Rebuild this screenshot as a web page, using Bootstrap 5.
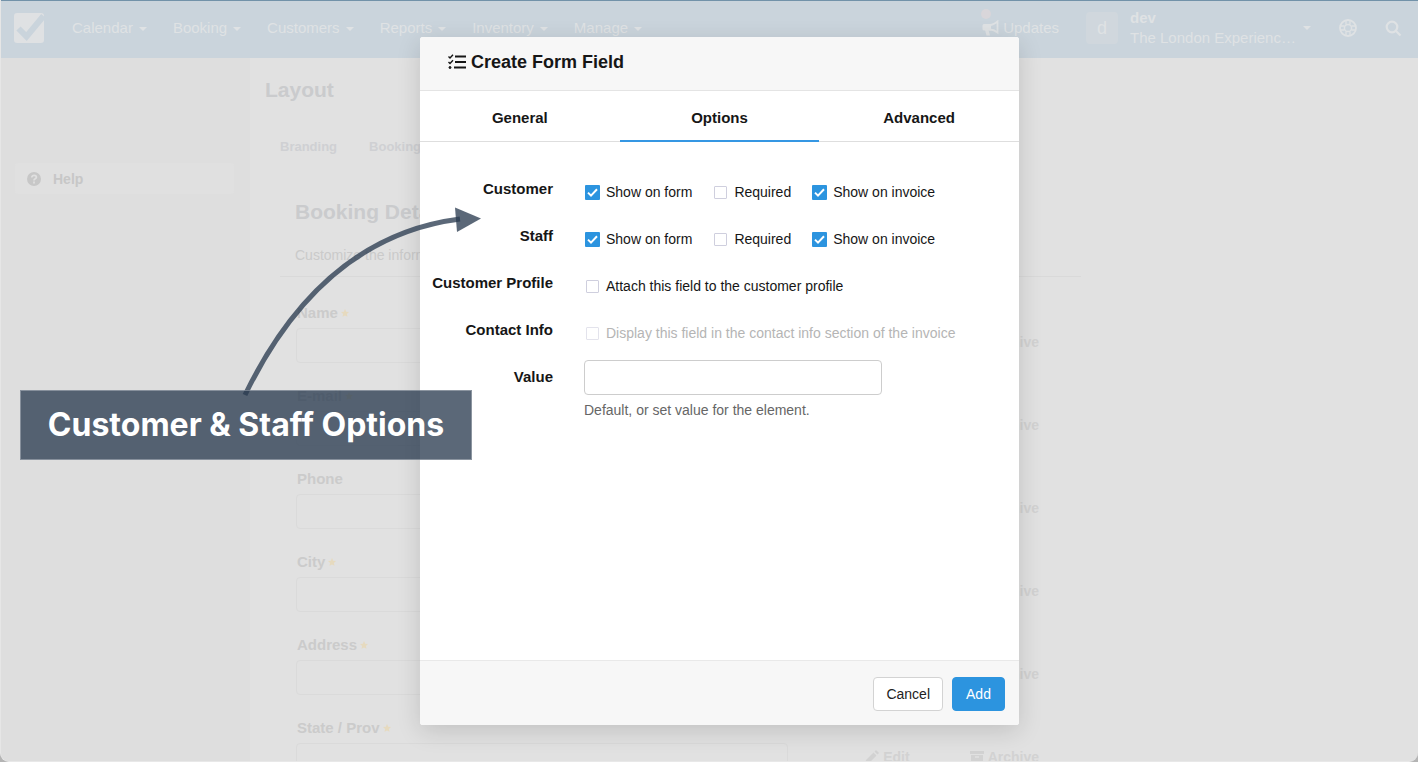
<!DOCTYPE html>
<html lang="en">
<head>
<meta charset="utf-8">
<meta name="viewport" content="width=device-width, initial-scale=1">
<title>Create Form Field</title>
<link href="https://cdn.jsdelivr.net/npm/bootstrap@5.3.0/dist/css/bootstrap.min.css" rel="stylesheet">
<style>
  body { font-family: "Liberation Sans", Arial, sans-serif; font-size: 15px; line-height: 22px; background: #b4b4b4; color: #161616; }
  a { text-decoration: none; color: inherit; }
  /* dimmed application behind the dialog */
  .app-shell { background: #e1e1e1; border-radius: 0 0 9px 9px; border-left: 1px solid #e6e6e6; border-bottom: 1px solid #e8e8e8; color: #cbcbcb; }
  .topbar { height: 58px; background: #cad4dc; border-top: 1px solid #7292a9; color: #dfe2e4; padding: 0 16px 3px 12px; }
  .topbar .menu { gap: 26px; margin-left: 27px; }
  .topbar a { white-space: nowrap; }
  .arrow-down { display: inline-block; border: 4px solid transparent; border-top-color: currentColor; border-bottom: 0; margin-left: 6px; vertical-align: 2px; }
  .updates { margin-right: 27px; }
  .dot { width: 10px; height: 10px; background: #d9d6da; top: -8px; left: -1px; }
  .avatar { width: 32px; height: 32px; background: #d0d7dd; border-radius: 4px; font-size: 18px; margin-right: 12px; }
  .account { line-height: 20px; width: 173px; }
  .side { width: 249px; background: #dedede; padding: 105px 16px 0 14px; }
  .help { background: #e0e0e0; height: 31px; padding: 0 12px; gap: 12px; border-radius: 3px; color: #c7c7c7; font-size: 14px; }
  .page { padding: 17px 0 0 15px; }
  .page h1 { font-size: 21px; line-height: 30px; margin: 0 0 31px; color: #cacbcd; }
  .subtabs { gap: 32px; padding-left: 15px; font-size: 13px; color: #cfd0d3; }
  .page h2 { font-size: 21px; line-height: 30px; margin: 0 0 17px; color: #cacbcd; }
  .panel-top { padding: 39px 0 0 15px; margin-left: 15px; width: 801px; border-bottom: 1px solid #d9d9d9; height: 119px; color: #cacaca; font-size: 14px; }
  .entry { margin: 0 0 22px 31px; width: 743px; }
  .entry label { line-height: 22px; margin-bottom: 4px; padding-left: 1px; }
  .entry .ghost { width: 492px; height: 35px; border: 1px solid #dadada; background: #e1e1e1; border-radius: 4px; }
  .entry .tools { gap: 60px; height: 28px; color: #d2d2d2; font-size: 14px; }
  .entries { padding-top: 25px; }
  .star { color: #e6dabf; width: 8px; height: 8px; margin-left: 3px; vertical-align: 1px; }
  /* dialog */
  .stage { padding: 37px 0 37px 21px; }
  .dialog { width: 599px; border: 0; border-radius: 3px; background: #fff; box-shadow: 0 6px 24px rgba(0,0,0,.14); }
  .dialog-head { height: 54px; padding: 0 28px 3px; gap: 5px; background: #f7f7f7; border-bottom: 1px solid #e4e4e4; border-radius: 3px 3px 0 0; }
  .dialog-head h3 { font-size: 18px; line-height: 24px; margin: 0; }
  .steps { height: 51px; border-bottom: 1px solid #dedede; }
  .steps button { border: 0; background: none; font-weight: 700; color: #161616; padding: 4px 0 0; height: 51px; border-bottom: 2px solid transparent; }
  .steps button.on { border-bottom-color: #3597e3; }
  .fields { padding: 30px 16px 0 0; }
  .line { min-height: 47px; gap: 31px; }
  .line .caption { width: 133px; padding-top: 6px; text-align: right; font-weight: 700; }
  .checks { padding: 9px 0 0 1px; gap: 21px; height: 31px; font-size: 14px; }
  .checks label { display: flex; align-items: center; gap: 6px; white-space: nowrap; }
  .checks label.muted { color: #b5b5b5; }
  .checks input { appearance: none; width: 13px; height: 13px; margin: 0 1px; border: 1px solid #cfcfde; border-radius: 1px; background: #fff; }
  .checks input:checked { width: 15px; height: 15px; margin: 0; border: 0; background: #2c94df url("data:image/svg+xml,%3Csvg xmlns='http://www.w3.org/2000/svg' viewBox='0 0 15 15'%3E%3Cpath d='M3 7.6l3 3 6-6.3' fill='none' stroke='%23fff' stroke-width='2'/%3E%3C/svg%3E"); }
  .checks input:disabled { border-color: #e3e3ec; }
  .value-box { width: 298px; height: 35px; border: 1px solid #cdcdcd; border-radius: 4px; padding: 6px 10px; }
  .hint { margin-top: 4px; color: #666; font-size: 14px; }
  .dialog-foot { height: 65px; padding: 2px 14px 0; gap: 9px; background: #f7f7f7; border-top: 1px solid #e9e9e9; border-radius: 0 0 3px 3px; }
  .dialog-foot .btn { height: 34px; min-width: 53px; padding: 0 12px; font-size: 14px; line-height: 20px; border-radius: 4px; }
  .btn-plain { background: #fff; border: 1px solid #d3d3d3; color: #222; }
  .btn-go { background: #2c94df; border: 1px solid #2c94df; color: #fff; }
  /* annotation */
  .note { left: 20px; top: 390px; width: 452px; height: 70px; background: rgba(42,58,80,.77); border: 1px solid rgba(255,255,255,.3); color: #fff; font: 700 32px/68px Inter, sans-serif; text-align: center; white-space: nowrap; }
  .note-arrow { left: 230px; top: 195px; }
</style>
</head>
<body class="vh-100 overflow-hidden position-relative">
<div class="app-shell h-100 d-flex flex-column overflow-hidden">
  <nav class="topbar d-flex align-items-center flex-shrink-0">
    <a href="#" aria-label="Home"><svg width="32" height="32" viewBox="0 0 32 32" class="d-block"><rect x="1" y="1" width="30" height="30" rx="3" fill="#dfe1e3"/><path d="M5.500 16.500L13.500 24.500L30.500 4" fill="none" stroke="#cad4dc" stroke-width="6"/></svg></a>
    <div class="menu d-flex">
      <a href="#">Calendar<span class="arrow-down"></span></a>
      <a href="#">Booking<span class="arrow-down"></span></a>
      <a href="#">Customers<span class="arrow-down"></span></a>
      <a href="#">Reports<span class="arrow-down"></span></a>
      <a href="#">Inventory<span class="arrow-down"></span></a>
      <a href="#">Manage<span class="arrow-down"></span></a>
    </div>
    <div class="ms-auto d-flex align-items-center">
      <a href="#" class="updates position-relative d-flex align-items-center gap-1"><span class="dot position-absolute rounded-circle"></span><svg width="17" height="16" viewBox="0 0 17 16"><path d="M8 5c3 0 5-1.500 7.500-3.500v11C13 10.500 11 9.500 8 9.500z" fill="none" stroke="currentColor" stroke-width="1.800"/><path d="M2 4h7v6.500H2a1.500 1.500 0 0 1-1.500-1.500V5.500A1.500 1.500 0 0 1 2 4zM3 10h3.500l1.500 5.500H4.500z" fill="currentColor"/></svg>Updates</a>
      <span class="avatar d-flex align-items-center justify-content-center">d</span>
      <a href="#" class="account"><strong class="d-block">dev</strong>The London Experienc…</a>
      <span class="arrow-down m-0"></span>
      <a href="#" aria-label="Support" class="ms-4 ps-1"><svg width="18" height="18" viewBox="0 0 18 18" class="d-block" fill="none" stroke="currentColor"><circle cx="9" cy="9" r="8" stroke-width="1.800"/><circle cx="9" cy="9" r="3.600" stroke-width="1.500"/><path d="M7 1.500v4M11 1.500v4M7 12.500v4M11 12.500v4M1.500 7h4M12.500 7h4M1.500 11h4M12.500 11h4" stroke-width="1.300"/></svg></a>
      <a href="#" aria-label="Search" class="ms-4 ps-1"><svg width="17" height="17" viewBox="0 0 17 17" class="d-block" fill="none" stroke="currentColor" stroke-width="2.200"><circle cx="7" cy="7" r="5.300"/><path d="M11 11l4.500 4.500"/></svg></a>
    </div>
  </nav>
  <div class="d-flex flex-fill overflow-hidden">
    <aside class="side flex-shrink-0">
      <a href="#" class="help d-flex align-items-center fw-bold"><svg width="14" height="14" viewBox="0 0 14 14"><circle cx="7" cy="7" r="7" fill="currentColor"/><path d="M4.800 5.500c0-3 4.600-2.700 4.600-.2C9.400 6.900 7 6.700 7 8.400M7 9.600v2" fill="none" stroke="#e0e0e0" stroke-width="1.700"/></svg>Help</a>
    </aside>
    <main class="page flex-fill">
      <h1 class="fw-bold">Layout</h1>
      <div class="subtabs d-flex fw-bold"><a href="#">Branding</a><a href="#">Booking</a></div>
      <div class="panel-top"><h2 class="fw-bold">Booking Details</h2><p class="m-0">Customize the information</p></div>
      <div class="entries">
        <div class="entry"><label class="d-block fw-bold" for="f1">Name<svg class="star" viewBox="0 0 10 10"><path d="M5 0l1.500 3.300 3.500.4-2.600 2.400.7 3.600L5 8 1.900 9.700l.7-3.600L0 3.700l3.500-.4z" fill="currentColor"/></svg></label>
          <div class="d-flex justify-content-between"><input id="f1" class="ghost"><div class="tools d-flex align-items-center fw-bold"><a href="#">Archive</a></div></div></div>
        <div class="entry"><label class="d-block fw-bold" for="f2">E-mail<svg class="star" viewBox="0 0 10 10"><path d="M5 0l1.500 3.300 3.500.4-2.600 2.400.7 3.600L5 8 1.900 9.700l.7-3.600L0 3.700l3.500-.4z" fill="currentColor"/></svg></label>
          <div class="d-flex justify-content-between"><input id="f2" class="ghost"><div class="tools d-flex align-items-center fw-bold"><a href="#">Archive</a></div></div></div>
        <div class="entry"><label class="d-block fw-bold" for="f3">Phone</label>
          <div class="d-flex justify-content-between"><input id="f3" class="ghost"><div class="tools d-flex align-items-center fw-bold"><a href="#">Archive</a></div></div></div>
        <div class="entry"><label class="d-block fw-bold" for="f4">City<svg class="star" viewBox="0 0 10 10"><path d="M5 0l1.500 3.300 3.500.4-2.600 2.400.7 3.600L5 8 1.900 9.700l.7-3.600L0 3.700l3.500-.4z" fill="currentColor"/></svg></label>
          <div class="d-flex justify-content-between"><input id="f4" class="ghost"><div class="tools d-flex align-items-center fw-bold"><a href="#">Archive</a></div></div></div>
        <div class="entry"><label class="d-block fw-bold" for="f5">Address<svg class="star" viewBox="0 0 10 10"><path d="M5 0l1.500 3.300 3.500.4-2.600 2.400.7 3.600L5 8 1.900 9.700l.7-3.600L0 3.700l3.500-.4z" fill="currentColor"/></svg></label>
          <div class="d-flex justify-content-between"><input id="f5" class="ghost"><div class="tools d-flex align-items-center fw-bold"><a href="#">Archive</a></div></div></div>
        <div class="entry"><label class="d-block fw-bold" for="f6">State / Prov<svg class="star" viewBox="0 0 10 10"><path d="M5 0l1.500 3.300 3.500.4-2.600 2.400.7 3.600L5 8 1.900 9.700l.7-3.600L0 3.700l3.500-.4z" fill="currentColor"/></svg></label>
          <div class="d-flex justify-content-between"><input id="f6" class="ghost"><div class="tools d-flex align-items-center fw-bold">
            <a href="#" class="d-flex align-items-center gap-1"><svg width="14" height="14" viewBox="0 0 14 14" fill="currentColor"><path d="M0 14l1-4 7.500-7.500 3 3L4 13zM9.500 1.500L11 0l3 3-1.500 1.500z"/></svg>Edit</a>
            <a href="#" class="d-flex align-items-center gap-1"><svg width="14" height="13" viewBox="0 0 14 13" fill="currentColor"><path d="M0 0h14v3H0zM1 4h12v9H1z"/><path d="M5 6h4" stroke="#e1e1e1" stroke-width="1.500"/></svg>Archive</a></div></div></div>
      </div>
    </main>
  </div>
</div>

<div class="stage position-absolute top-0 start-0 w-100 h-100 d-flex justify-content-center">
  <section class="dialog d-flex flex-column h-100" role="dialog" aria-labelledby="dlg-title">
    <header class="dialog-head d-flex align-items-center">
      <svg width="18" height="16" viewBox="0 0 18 16" fill="none" stroke="#161616"><path d="M7 2.500h11M7 8h11M6 13.500h12" stroke-width="2"/><path d="M0.500 2.500l1.500 1.500L5 .7M.5 8L2 9.500 5 6.200" stroke-width="1.400"/><circle cx="2" cy="13.500" r="1" fill="#161616" stroke-width="1"/></svg>
      <h3 id="dlg-title" class="fw-bold">Create Form Field</h3>
    </header>
    <div class="steps d-flex" role="tablist">
      <button type="button" role="tab" class="col-4">General</button>
      <button type="button" role="tab" class="col-4 on" aria-selected="true">Options</button>
      <button type="button" role="tab" class="col-4">Advanced</button>
    </div>
    <form class="fields flex-fill" id="field-form">
      <div class="line d-flex"><div class="caption">Customer</div><div class="checks d-flex"><label><input type="checkbox" checked>Show on form</label><label><input type="checkbox">Required</label><label><input type="checkbox" checked>Show on invoice</label></div></div>
      <div class="line d-flex"><div class="caption">Staff</div><div class="checks d-flex"><label><input type="checkbox" checked>Show on form</label><label><input type="checkbox">Required</label><label><input type="checkbox" checked>Show on invoice</label></div></div>
      <div class="line d-flex"><div class="caption">Customer Profile</div><div class="checks d-flex"><label><input type="checkbox">Attach this field to the customer profile</label></div></div>
      <div class="line d-flex"><div class="caption">Contact Info</div><div class="checks d-flex"><label class="muted"><input type="checkbox" disabled>Display this field in the contact info section of the invoice</label></div></div>
      <div class="line d-flex"><label class="caption" for="val">Value</label><div><input id="val" type="text" class="value-box d-block"><div class="hint">Default, or set value for the element.</div></div></div>
    </form>
    <footer class="dialog-foot d-flex align-items-center justify-content-end">
      <button type="button" class="btn btn-plain">Cancel</button>
      <button type="submit" form="field-form" class="btn btn-go">Add</button>
    </footer>
  </section>
</div>

<svg class="note-arrow position-absolute" width="260" height="205" viewBox="0 0 260 205" aria-hidden="true"><path d="M15 200C60 107 128 37 230 24" fill="none" stroke="#2a3a50" stroke-opacity=".77" stroke-width="5"/><path d="M225 12.500l26 11-24 13.500z" fill="#2a3a50" fill-opacity=".77"/></svg>
<div class="note position-absolute">Customer &amp; Staff Options</div>
<script src="https://cdn.jsdelivr.net/npm/bootstrap@5.3.0/dist/js/bootstrap.bundle.min.js"></script>
</body>
</html>
